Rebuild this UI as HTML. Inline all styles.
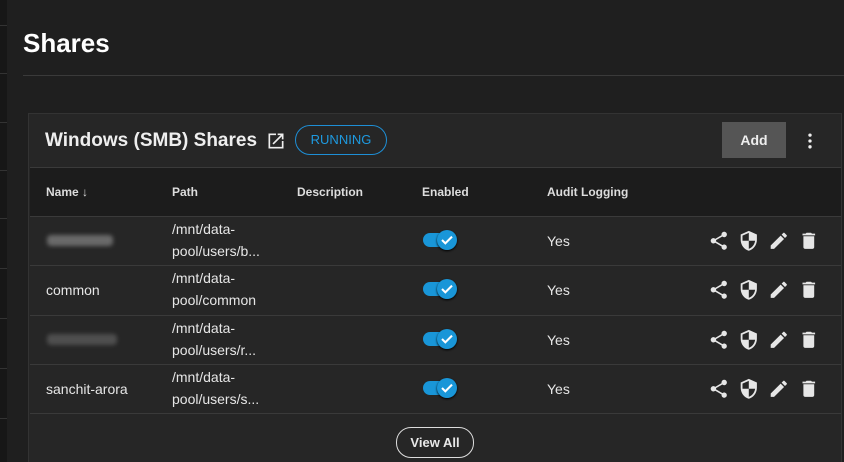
<!DOCTYPE html>
<html style="width:844px;height:462px;overflow:hidden"><head><style>
body{margin:0;width:844px;height:462px;background:#1f1f1f;font-family:"Liberation Sans",Arial,sans-serif;color:#e8e8e8;overflow:hidden;position:relative}
.strip{position:absolute;left:0;top:0;width:7px;height:462px;background:#171717}
.strip i{position:absolute;left:0;width:7px;height:1px;background:#333}
h1{position:absolute;left:23px;top:28px;margin:0;font-size:26px;font-weight:bold;color:#fff}
.hr{position:absolute;left:23px;right:0;top:75px;height:1px;background:#3a3a3a}
.card{position:absolute;left:28px;top:113px;width:812px;height:360px;background:#262626;border:1px solid #333}
.ttl{position:absolute;left:16px;top:16px;font-size:19px;font-weight:bold;color:#eee}
.run{position:absolute;left:266px;top:11px;width:90px;height:28px;border:1px solid #1e8fd6;border-radius:15px;color:#1e9ae0;font-size:13px;text-align:center;line-height:28px}
.add{position:absolute;left:693px;top:8px;width:64px;height:36px;background:#555;color:#eee;font-weight:bold;font-size:14px;text-align:center;line-height:36px}
.thead{position:absolute;left:1px;right:0;top:53px;height:49px;background:#1c1c1c;border-top:1px solid #3a3a3a}
.th{position:absolute;top:17px;font-size:12px;font-weight:bold;color:#ddd}
.row{position:absolute;left:1px;right:0;height:49px;border-top:1px solid #3a3a3a}
.c{position:absolute;font-size:14px;color:#e6e6e6}
.p{position:absolute;left:142px;top:1px;font-size:14px;line-height:22px;color:#e6e6e6}
.tg{position:absolute;left:393px;top:16px;width:30px;height:14px;border-radius:7px;background:#1996d8}
.tg b{position:absolute;left:14px;top:-3px;width:20px;height:20px;border-radius:50%;background:#1996d8;box-shadow:0 1px 2px #000}
.ic{position:absolute;left:678px;top:13px}
.blur{position:absolute;left:17px;top:18px;width:66px;height:11px;background:#6a6a6a;border-radius:4px;filter:blur(2px)}
.va{position:absolute;left:367px;top:313px;width:76px;height:29px;border:1px solid #ddd;border-radius:15px;text-align:center;line-height:29px;font-size:13px;font-weight:bold}
</style></head><body>
<div class="strip"><i style="top:25px"></i><i style="top:73px"></i><i style="top:122px"></i><i style="top:170px"></i><i style="top:218px"></i><i style="top:268px"></i><i style="top:318px"></i><i style="top:368px"></i><i style="top:418px"></i></div>
<h1>Shares</h1><div class="hr"></div>
<div class="card">
<div class="ttl">Windows (SMB) Shares</div>
<svg style="position:absolute;left:237px;top:17px" width="20" height="20" viewBox="0 0 24 24"><path fill="#eee" d="M19 19H5V5h7V3H3v18h18v-9h-2v7zM14 3v2h3.59l-9.83 9.830 1.41 1.41L19 6.41V10h2V3h-7z"/></svg>
<div class="run">RUNNING</div>
<div class="add">Add</div>
<svg style="position:absolute;left:771px;top:17px" width="20" height="20" viewBox="0 0 24 24"><circle cx="12" cy="5" r="2" fill="#eee"/><circle cx="12" cy="12" r="2" fill="#eee"/><circle cx="12" cy="19" r="2" fill="#eee"/></svg>
<div class="thead">
<div class="th" style="left:16px">Name &#8595;</div><div class="th" style="left:142px">Path</div><div class="th" style="left:267px">Description</div><div class="th" style="left:392px">Enabled</div><div class="th" style="left:517px">Audit Logging</div>
</div>
<div class="row" style="top:102px"><div class="blur"></div><div class="p">/mnt/data-<br>pool/users/b...</div><div class="tg"><b><svg width="20" height="20" viewBox="0 0 24 24"><path d="M6 12l4 4 8-8" stroke="#fff" stroke-width="2.5" fill="none"/></svg></b></div><div class="c" style="left:517px;top:16px">Yes</div><div class="ic"><svg width="120" height="22" viewBox="0 0 120 22"><g fill="#e6e6e6"><g transform="translate(0,0) scale(0.9)"><path d="M18 16.08c-.76 0-1.44.3-1.96.77L8.91 12.7c.05-.23.09-.46.09-.7s-.04-.47-.09-.7l7.050-4.11c.54.5 1.25.81 2.04.81 1.66 0 3-1.34 3-3s-1.34-3-3-3-3 1.34-3 3c0 .24.04.47.09.7L8.04 9.81C7.5 9.31 6.79 9 6 9c-1.66 0-3 1.34-3 3s1.34 3 3 3c.79 0 1.5-.31 2.04-.81l7.12 4.16c-.05.21-.08.43-.08.65 0 1.61 1.31 2.92 2.92 2.92s2.92-1.31 2.92-2.920-1.31-2.92-2.92-2.92z"/></g><g transform="translate(30,0) scale(0.9)"><path d="M12 1L3 5v6c0 5.55 3.84 10.74 9 12 5.16-1.26 9-6.45 9-12V5l-9-4zm0 10.99h7c-.53 4.12-3.28 7.79-7 8.94V12H5V6.3l7-3.11v8.8z"/></g><g transform="translate(60,0) scale(0.9)"><path d="M3 17.25V21h3.75L17.81 9.94l-3.75-3.75L3 17.25zM20.71 7.04a1 1 0 000-1.41l-2.34-2.34a1 1 0 00-1.41 0l-1.83 1.83 3.75 3.75 1.83-1.83z"/></g><g transform="translate(90,0) scale(0.9)"><path d="M6 19c0 1.1.9 2 2 2h8c1.1 0 2-.9 2-2V7H6v12zM19 4h-3.5l-1-1h-5l-1 1H5v2h14V4z"/></g></g></svg></div></div>
<div class="row" style="top:151px"><div class="c" style="left:16px;top:16px">common</div><div class="p">/mnt/data-<br>pool/common</div><div class="tg"><b><svg width="20" height="20" viewBox="0 0 24 24"><path d="M6 12l4 4 8-8" stroke="#fff" stroke-width="2.5" fill="none"/></svg></b></div><div class="c" style="left:517px;top:16px">Yes</div><div class="ic"></div></div>
<div class="row" style="top:201px"><div class="blur" style="width:70px;opacity:.6"></div><div class="p">/mnt/data-<br>pool/users/r...</div><div class="tg"><b><svg width="20" height="20" viewBox="0 0 24 24"><path d="M6 12l4 4 8-8" stroke="#fff" stroke-width="2.5" fill="none"/></svg></b></div><div class="c" style="left:517px;top:16px">Yes</div><div class="ic"></div></div>
<div class="row" style="top:250px"><div class="c" style="left:16px;top:16px">sanchit-arora</div><div class="p">/mnt/data-<br>pool/users/s...</div><div class="tg"><b><svg width="20" height="20" viewBox="0 0 24 24"><path d="M6 12l4 4 8-8" stroke="#fff" stroke-width="2.5" fill="none"/></svg></b></div><div class="c" style="left:517px;top:16px">Yes</div><div class="ic"></div></div>
<div class="row" style="top:299px"></div>
<div class="va">View All</div>
</div>
<script>
var f=document.querySelector('.ic').innerHTML;document.querySelectorAll('.ic').forEach(function(e){e.innerHTML=f});
</script>
</body></html>
